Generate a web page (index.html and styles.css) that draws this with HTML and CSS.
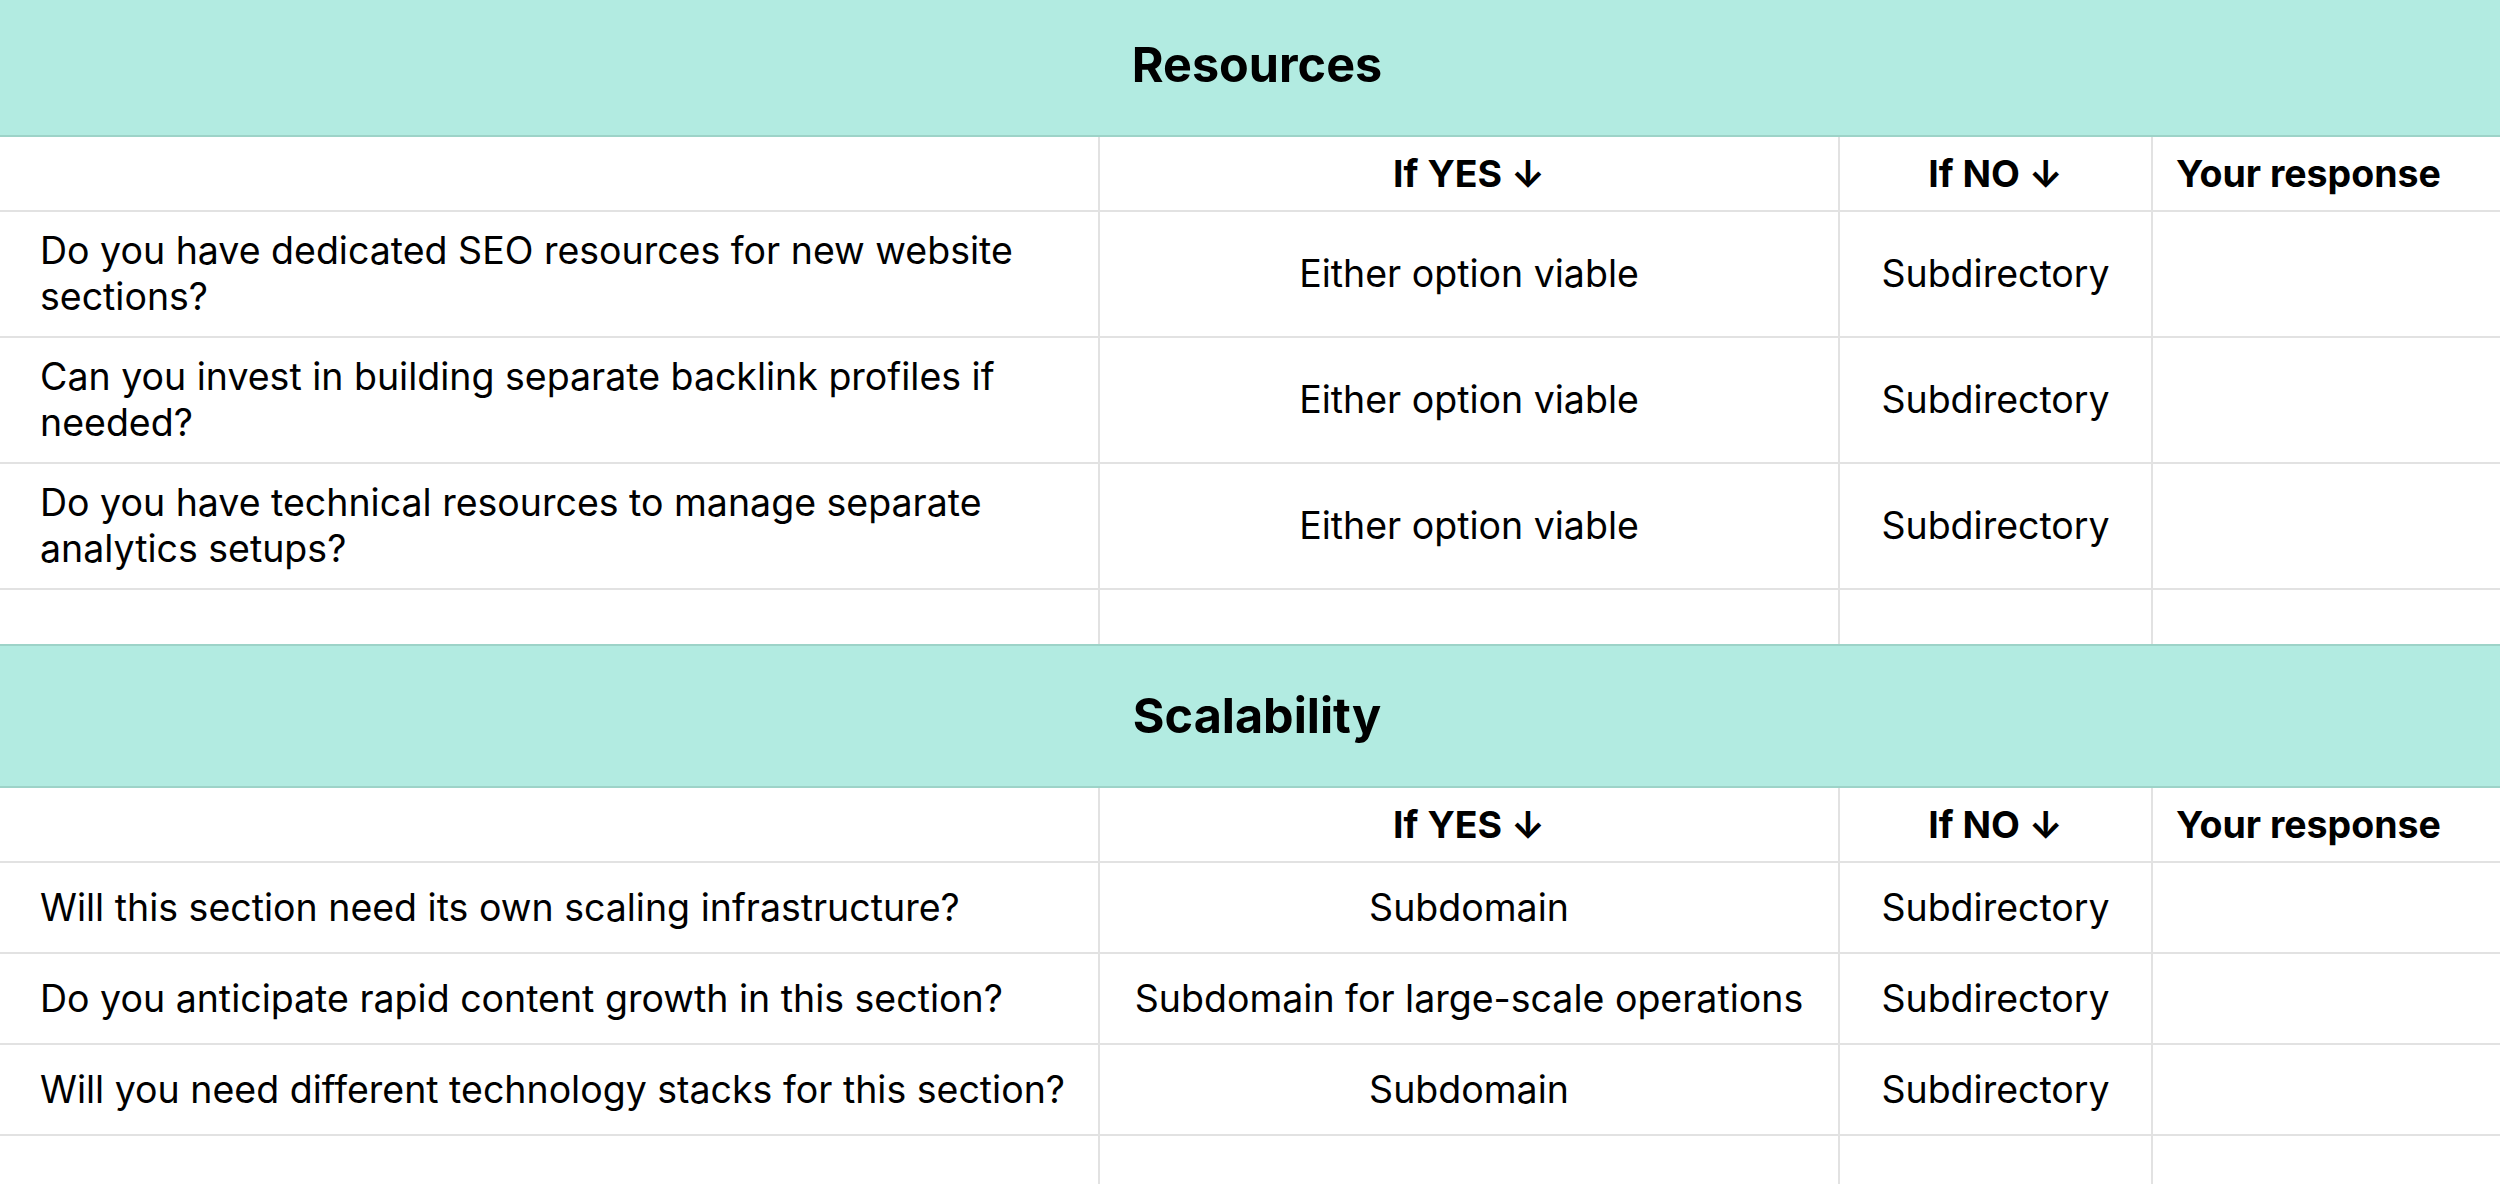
FILE: index.html
```html
<!DOCTYPE html>
<html lang="en">
<head>
<meta charset="utf-8">
<title>Subdomain vs Subdirectory checklist</title>
<link rel="stylesheet" href="styles.css">
</head>
<body>
<div class="sheet">
  <div class="band"><h2 class="band-title">Resources</h2></div>

  <div class="cell hd q"></div>
  <div class="cell hd ans">If YES ↓</div>
  <div class="cell hd ans">If NO ↓</div>
  <div class="cell hd ans resp">Your response</div>

  <div class="cell q">Do you have dedicated SEO resources for new website sections?</div>
  <div class="cell ans">Either option viable</div>
  <div class="cell ans">Subdirectory</div>
  <div class="cell ans resp"></div>

  <div class="cell q">Can you invest in building separate backlink profiles if needed?</div>
  <div class="cell ans">Either option viable</div>
  <div class="cell ans">Subdirectory</div>
  <div class="cell ans resp"></div>

  <div class="cell q">Do you have technical resources to manage separate analytics setups?</div>
  <div class="cell ans">Either option viable</div>
  <div class="cell ans">Subdirectory</div>
  <div class="cell ans resp"></div>

  <div class="cell blank q"></div>
  <div class="cell blank ans"></div>
  <div class="cell blank ans"></div>
  <div class="cell blank ans resp"></div>

  <div class="band"><h2 class="band-title">Scalability</h2></div>

  <div class="cell hd q"></div>
  <div class="cell hd ans">If YES ↓</div>
  <div class="cell hd ans">If NO ↓</div>
  <div class="cell hd ans resp">Your response</div>

  <div class="cell q">Will this section need its own scaling infrastructure?</div>
  <div class="cell ans">Subdomain</div>
  <div class="cell ans">Subdirectory</div>
  <div class="cell ans resp"></div>

  <div class="cell q">Do you anticipate rapid content growth in this section?</div>
  <div class="cell ans">Subdomain for large-scale operations</div>
  <div class="cell ans">Subdirectory</div>
  <div class="cell ans resp"></div>

  <div class="cell q">Will you need different technology stacks for this section?</div>
  <div class="cell ans">Subdomain</div>
  <div class="cell ans">Subdirectory</div>
  <div class="cell ans resp"></div>

  <div class="cell blank tail q"></div>
  <div class="cell blank tail ans"></div>
  <div class="cell blank tail ans"></div>
  <div class="cell blank tail ans resp"></div>
</div>
</body>
</html>
```

FILE: styles.css
```css
html, body {
  margin: 0;
  padding: 0;
  background: #ffffff;
  overflow: hidden;
}

body {
  font-family: Inter, "Noto Sans", "Liberation Sans", sans-serif;
  color: #000000;
}

.sheet {
  display: grid;
  grid-template-columns: 1098px 740px 313px 371px;
  width: 2522px;
  margin-top: -7px;
}

.band {
  grid-column: 1 / -1;
  box-sizing: border-box;
  height: 144px;
  background: #b2ebe1;
  border-top: 2px solid #9dd3c8;
  border-bottom: 2px solid #9dd3c8;
  display: flex;
  align-items: center;
  justify-content: center;
}

.band-title {
  margin: 0;
  font-size: 48.5px;
  line-height: 58px;
  font-weight: 700;
  padding-right: 8px;
}

.cell {
  box-sizing: border-box;
  min-height: 91px;
  border-bottom: 2px solid #e2e2e2;
  display: flex;
  align-items: center;
  font-size: 37.5px;
  line-height: 46px;
  padding: 16px;
}

.q {
  padding-left: 40px;
  padding-right: 8px;
}

.ans {
  border-left: 2px solid #e2e2e2;
  justify-content: center;
  text-align: center;
}

.resp {
  padding-right: 74px;
}

.hd {
  min-height: 0;
  height: 75px;
  font-weight: 700;
  padding-top: 0;
  padding-bottom: 0;
}

.blank {
  min-height: 0;
  height: 54px;
  border-bottom: none;
}

.tail {
  height: 60px;
}
```
